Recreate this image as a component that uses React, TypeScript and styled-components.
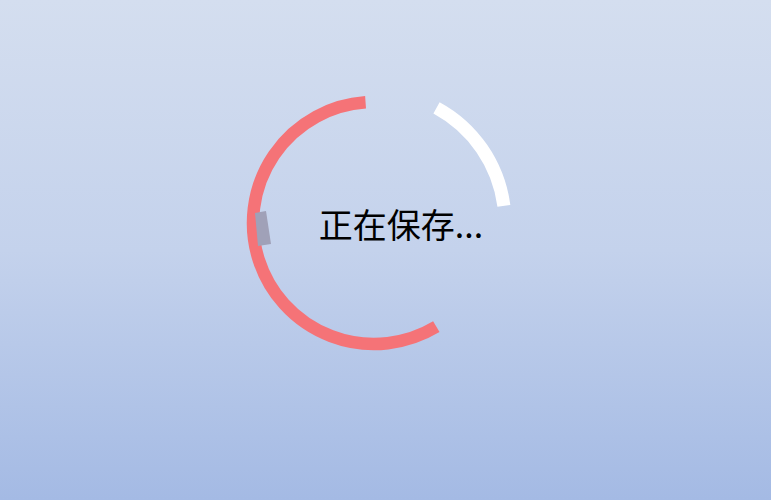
import React from "react";
import styled, { createGlobalStyle } from "styled-components";

const GlobalStyle = createGlobalStyle`
  html, body, #root { margin: 0; padding: 0; height: 100%; }
  body { font-family: "Noto Sans CJK SC", "Noto Sans", sans-serif; }
`;

const Screen = styled.main`
  box-sizing: border-box;
  min-height: 100vh;
  display: flex;
  align-items: center;
  justify-content: center;
  padding: 0 23px 54px 0;
  background: linear-gradient(180deg, #d4deef 0%, #c4d2ec 50%, #a4bae4 100%);
  overflow: hidden;
`;

const Loader = styled.div`
  display: grid;
`;

const Spinner = styled.svg`
  grid-area: 1 / 1;
  width: 290px;
  height: 290px;
  display: block;
`;

const Label = styled.div`
  grid-area: 1 / 1;
  align-self: center;
  justify-self: center;
  margin: 2px 0 0 54px;
  font-family: "Noto Sans CJK SC", "Noto Sans", sans-serif;
  font-size: 34px;
  line-height: 1;
  color: #000;
  white-space: nowrap;
`;

const C = 145;
const pt = (r: number, deg: number) => {
  const a = (deg * Math.PI) / 180;
  return `${(C + r * Math.cos(a)).toFixed(2)} ${(C + r * Math.sin(a)).toFixed(2)}`;
};
const arc = (r: number, from: number, to: number) => {
  const large = to - from > 180 ? 1 : 0;
  return `M ${pt(r, from)} A ${r} ${r} 0 ${large} 1 ${pt(r, to)}`;
};

export default function App() {
  return (
    <>
      <GlobalStyle />
      <Screen>
        <Loader>
          <Spinner viewBox="0 0 290 290">
            <path d={arc(121, 59, 266)} fill="none" stroke="#f57377" strokeWidth={12.5} />
            <path d={arc(131, 298.5, 352.5)} fill="none" stroke="#ffffff" strokeWidth={13} />
            <polygon points="26,135 37,133 42,166 29,168" fill="#a0a1b8" />
          </Spinner>
          <Label>正在保存...</Label>
        </Loader>
      </Screen>
    </>
  );
}
